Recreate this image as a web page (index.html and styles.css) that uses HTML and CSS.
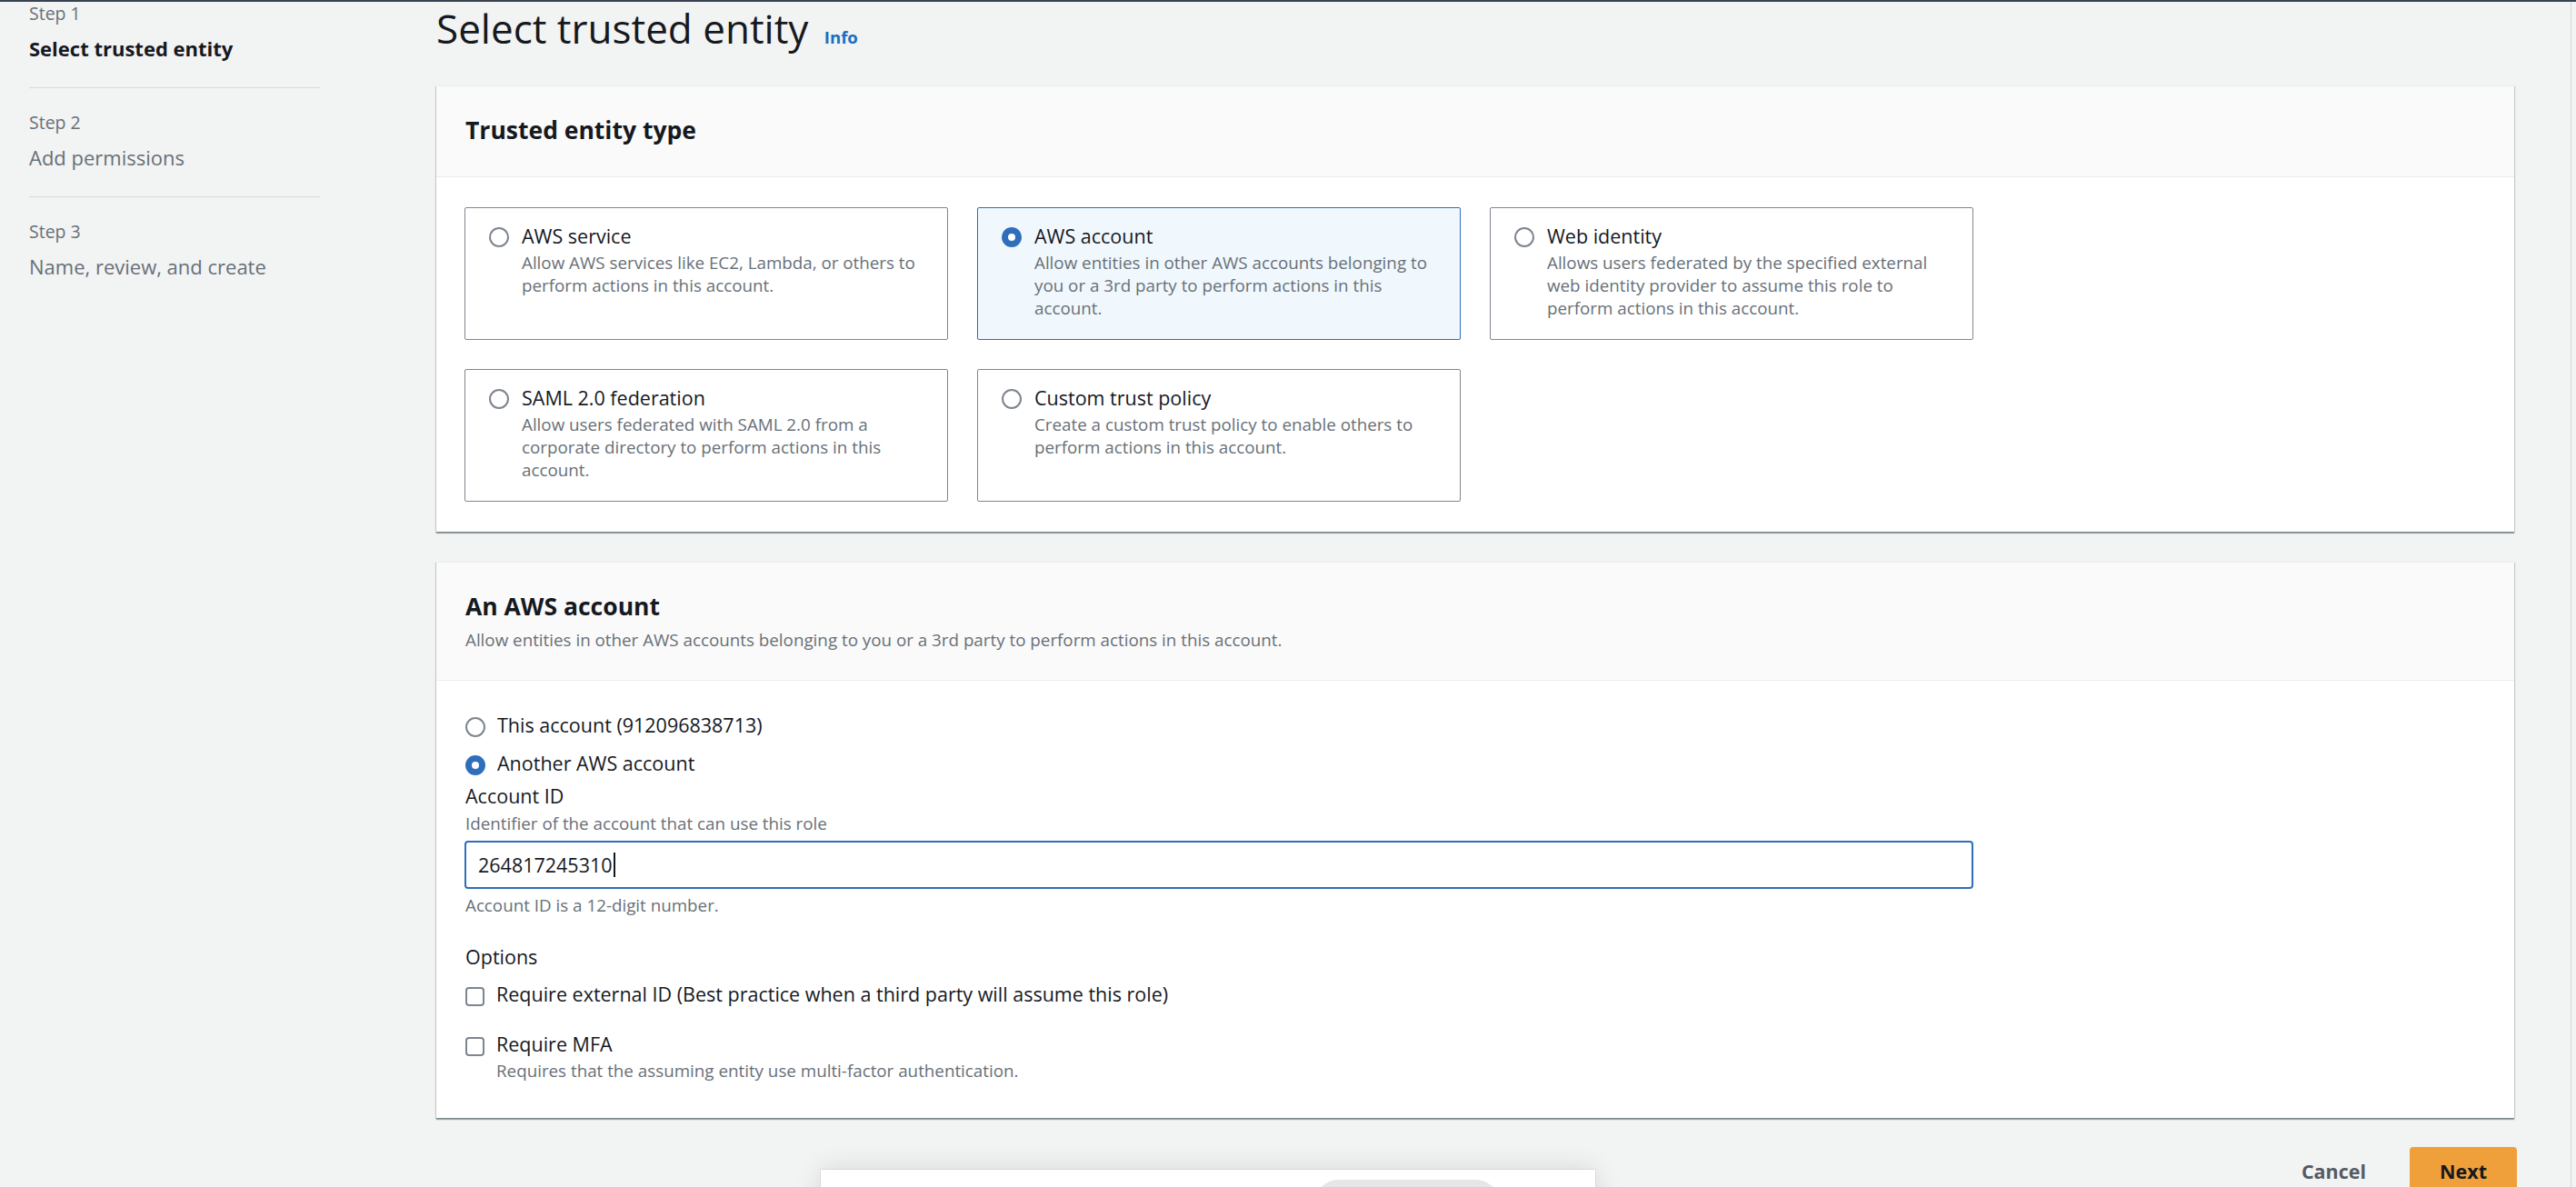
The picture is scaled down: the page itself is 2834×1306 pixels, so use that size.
FILE: index.html
```html
<!DOCTYPE html>
<html lang="en">
<head>
<meta charset="utf-8">
<title>Select trusted entity</title>
<link rel="stylesheet" href="styles.css">
</head>
<body>
<div class="layout">
  <nav class="steps">
    <div class="step active">
      <div class="step-num">Step 1</div>
      <div class="step-title">Select trusted entity</div>
    </div>
    <div class="step">
      <div class="step-num">Step 2</div>
      <div class="step-title">Add permissions</div>
    </div>
    <div class="step">
      <div class="step-num">Step 3</div>
      <div class="step-title">Name, review, and create</div>
    </div>
  </nav>

  <main class="main">
    <h1 class="page-title">Select trusted entity <a class="info" href="#">Info</a></h1>

    <section class="container first">
      <header class="container-header">
        <h2>Trusted entity type</h2>
      </header>
      <div class="container-body">
        <div class="tiles">
          <div class="tile">
            <span class="radio"></span>
            <div class="tile-text">
              <div class="tile-title">AWS service</div>
              <div class="tile-desc">Allow AWS services like EC2, Lambda, or others to perform actions in this account.</div>
            </div>
          </div>
          <div class="tile selected">
            <span class="radio checked"></span>
            <div class="tile-text">
              <div class="tile-title">AWS account</div>
              <div class="tile-desc">Allow entities in other AWS accounts belonging to you or a 3rd party to perform actions in this account.</div>
            </div>
          </div>
          <div class="tile">
            <span class="radio"></span>
            <div class="tile-text">
              <div class="tile-title">Web identity</div>
              <div class="tile-desc">Allows users federated by the specified external web identity provider to assume this role to perform actions in this account.</div>
            </div>
          </div>
          <div class="tile">
            <span class="radio"></span>
            <div class="tile-text">
              <div class="tile-title">SAML 2.0 federation</div>
              <div class="tile-desc">Allow users federated with SAML 2.0 from a corporate directory to perform actions in this account.</div>
            </div>
          </div>
          <div class="tile">
            <span class="radio"></span>
            <div class="tile-text">
              <div class="tile-title">Custom trust policy</div>
              <div class="tile-desc">Create a custom trust policy to enable others to perform actions in this account.</div>
            </div>
          </div>
        </div>
      </div>
    </section>

    <section class="container second">
      <header class="container-header">
        <h2>An AWS account</h2>
        <p class="header-desc">Allow entities in other AWS accounts belonging to you or a 3rd party to perform actions in this account.</p>
      </header>
      <div class="container-body body-form">
        <div class="radio-row">
          <span class="radio"></span>
          <span class="label">This account (912096838713)</span>
        </div>
        <div class="radio-row second-row">
          <span class="radio checked"></span>
          <span class="label">Another AWS account</span>
        </div>

        <div class="field-label">Account ID</div>
        <div class="field-desc">Identifier of the account that can use this role</div>
        <div class="input" role="textbox">264817245310<span class="caret"></span></div>
        <div class="field-constraint">Account ID is a 12-digit number.</div>

        <div class="options-label">Options</div>
        <div class="check-row">
          <span class="checkbox"></span>
          <div class="check-text">
            <div class="label">Require external ID (Best practice when a third party will assume this role)</div>
          </div>
        </div>
        <div class="check-row second-check">
          <span class="checkbox"></span>
          <div class="check-text">
            <div class="label">Require MFA</div>
            <div class="check-desc">Requires that the assuming entity use multi-factor authentication.</div>
          </div>
        </div>
      </div>
    </section>

    <div class="actions">
      <a class="cancel" href="#">Cancel</a>
      <button class="next" type="button">Next</button>
    </div>
  </main>

  <div class="scroll-edge"></div>
</div>

<div class="popup">
  <div class="popup-pill"></div>
</div>
</body>
</html>
```

FILE: styles.css
```css
* {
  box-sizing: border-box;
}

html,
body {
  margin: 0;
  height: 100%;
}

body {
  position: relative;
  overflow: hidden;
  background: #f2f3f3;
  border-top: 2px solid #394251;
  font-family: "Open Sans", "Noto Sans", sans-serif;
  color: #16191f;
}

.layout {
  display: flex;
  margin-top: -25px;
  min-height: calc(100vh + 25px);
}

/* ---------- side steps ---------- */
.steps {
  flex: none;
  width: 320px;
  margin-left: 32px;
}

.step {
  padding: 26px 0 29px;
  border-bottom: 1px solid #d5dbdb;
}

.step:last-child {
  border-bottom: none;
}

.step-num {
  font-size: 19.5px;
  line-height: 24px;
  color: #687078;
}

.step-title {
  margin-top: 12px;
  font-size: 22px;
  line-height: 28px;
  color: #687078;
}

.step.active .step-title {
  font-weight: 700;
  color: #16191f;
}

/* ---------- main ---------- */
.main {
  flex: 1;
  min-width: 0;
  margin-left: 128px;
  margin-right: 62px;
  padding-top: 26px;
}

.page-title {
  height: 56px;
  margin: 0;
  font-size: 44px;
  line-height: 56px;
  font-weight: 400;
  color: #16191f;
}

.info {
  margin-left: 6px;
  font-size: 18.5px;
  line-height: 1;
  font-weight: 700;
  color: #1b6ec2;
  text-decoration: none;
}

.container {
  background: #fff;
  border-top: 1px solid #eaeded;
  box-shadow: 0 2px 1px rgba(0, 28, 36, 0.32), 1px 1px 1px rgba(0, 28, 36, 0.14), -1px 1px 1px rgba(0, 28, 36, 0.14);
}

.container.first {
  margin-top: 35px;
}

.container.second {
  margin-top: 33px;
}

.container-header {
  background: #fafafa;
  border-bottom: 1px solid #eaeded;
  padding: 30px 32px 33px;
}

.second .container-header {
  padding-bottom: 31px;
}

.container-header h2 {
  margin: 0;
  font-size: 26.5px;
  line-height: 36px;
  font-weight: 700;
  color: #16191f;
}

.header-desc {
  margin: 7px 0 0;
  font-size: 18.8px;
  line-height: 25px;
  color: #687078;
}

.container-body {
  padding: 33px 32px 33px 31px;
}

/* ---------- tiles ---------- */
.tiles {
  display: grid;
  grid-template-columns: repeat(3, 532px);
  gap: 32px;
}

.tile {
  display: flex;
  gap: 14px;
  padding: 17px 24px 21px 26px;
  border: 1px solid #80878f;
  border-radius: 2px;
  background: #fff;
}

.tile.selected {
  border-color: #2e6eba;
  background: #f1f8fd;
}

.tile .radio {
  margin-top: 4px;
}

.tile-text {
  flex: 1;
  min-width: 0;
}

.tile-title {
  font-size: 21.5px;
  line-height: 28px;
  color: #16191f;
}

.tile-desc {
  margin-top: 3px;
  font-size: 18.8px;
  line-height: 25px;
  color: #687078;
}

/* ---------- controls ---------- */
.radio {
  flex: none;
  display: inline-block;
  width: 22px;
  height: 22px;
  border: 2px solid #7d8590;
  border-radius: 50%;
  background: #fff;
}

.radio.checked {
  border: 7px solid #2e6eba;
}

.checkbox {
  flex: none;
  display: inline-block;
  width: 21px;
  height: 21px;
  margin-top: 6px;
  border: 2px solid #7d8590;
  border-radius: 4px;
  background: #fff;
}

.label {
  font-size: 21.5px;
  line-height: 28px;
  color: #16191f;
}

/* ---------- form body ---------- */
.body-form {
  padding: 35px 32px 39px 32px;
}

.radio-row {
  display: flex;
  align-items: flex-start;
  gap: 13px;
}

.radio-row .radio {
  margin-top: 5px;
}

.radio-row.second-row {
  margin-top: 14px;
}

.field-label {
  margin-top: 8px;
  font-size: 21.5px;
  line-height: 28px;
  color: #16191f;
}

.field-desc {
  margin-top: 4px;
  font-size: 18.8px;
  line-height: 25px;
  color: #687078;
}

.input {
  display: flex;
  align-items: center;
  max-width: 1660px;
  height: 53px;
  margin-top: 6px;
  margin-left: -1px;
  padding: 0 13px;
  border: 2px solid #2e6eba;
  border-radius: 4px;
  background: #fff;
  font-size: 21.5px;
  line-height: 28px;
  color: #16191f;
}

.caret {
  display: inline-block;
  width: 2px;
  height: 27px;
  margin-left: 1px;
  background: #16191f;
}

.field-constraint {
  margin-top: 6px;
  font-size: 18.8px;
  line-height: 25px;
  color: #687078;
}

.options-label {
  margin-top: 30px;
  font-size: 21.5px;
  line-height: 28px;
  color: #16191f;
}

.check-row {
  display: flex;
  align-items: flex-start;
  gap: 13px;
  margin-top: 13px;
}

.check-row.second-check {
  margin-top: 27px;
}

.check-desc {
  margin-top: 3px;
  font-size: 18.8px;
  line-height: 25px;
  color: #687078;
}

/* ---------- actions ---------- */
.actions {
  display: flex;
  justify-content: flex-end;
  align-items: center;
  gap: 48px;
  margin-top: 32px;
  margin-right: -3px;
}

.cancel {
  font-size: 21.5px;
  line-height: 28px;
  font-weight: 700;
  color: #545b64;
  text-decoration: none;
}

.next {
  height: 54px;
  padding: 0 33px;
  border: none;
  border-radius: 4px;
  background: #f0a03a;
  font-family: inherit;
  font-size: 21.5px;
  line-height: 28px;
  font-weight: 700;
  color: #16191f;
}

.scroll-edge {
  flex: none;
  width: 6px;
  border-left: 1px solid #d5d9d9;
}

/* ---------- overlay at the bottom ---------- */
.popup {
  position: absolute;
  left: 903px;
  top: 1285px;
  width: 852px;
  height: 80px;
  padding: 11px 0 0 544px;
  background: #fff;
  box-shadow: 0 0 30px rgba(0, 0, 0, 0.12), 0 0 0 1px rgba(0, 0, 0, 0.06);
}

.popup-pill {
  width: 202px;
  height: 50px;
  border-radius: 25px;
  background: #e6e6e6;
}
```
